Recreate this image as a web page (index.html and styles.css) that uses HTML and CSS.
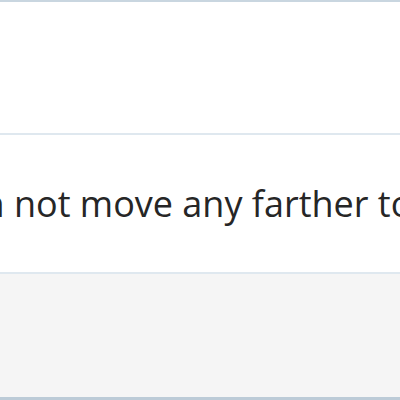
FILE: index.html
```html
<!DOCTYPE html>
<html lang="en">

<head>
    <meta charset="utf-8">
    <title>Notice</title>
    <link rel="stylesheet" href="styles.css">
</head>

<body>
    <div class="dialog">
        <div class="dialog-head"></div>
        <div class="dialog-body">
            <p class="msg">You can not move any farther to the left.</p>
        </div>
        <div class="dialog-foot"></div>
    </div>
</body>

</html>
```

FILE: styles.css
```css
/* reset */

body,
div,
p {
    margin: 0;
    padding: 0;
}

body {
    background: #fff;
    font-family: "Open Sans", "Noto Sans", sans-serif;
    overflow: hidden;
}

/* dialog frame */

.dialog {
    display: flex;
    flex-direction: column;
    height: 400px;
    border-top: 2px solid #c9d6e0;
    border-bottom: 3px solid #bccbd7;
    box-sizing: border-box;
}

.dialog-head {
    height: 131px;
    background: #fff;
    border-bottom: 2px solid #dfe8ef;
}

.dialog-body {
    height: 137px;
    display: flex;
    align-items: center;
    overflow: hidden;
    border-bottom: 2px solid #dfe8ef;
}

/* message text, wider than the frame */

.msg {
    white-space: nowrap;
    font-size: 36px;
    color: #262626;
    text-indent: -128px;
}

.dialog-foot {
    flex: 1;
    background: #f5f5f5;
}
```
